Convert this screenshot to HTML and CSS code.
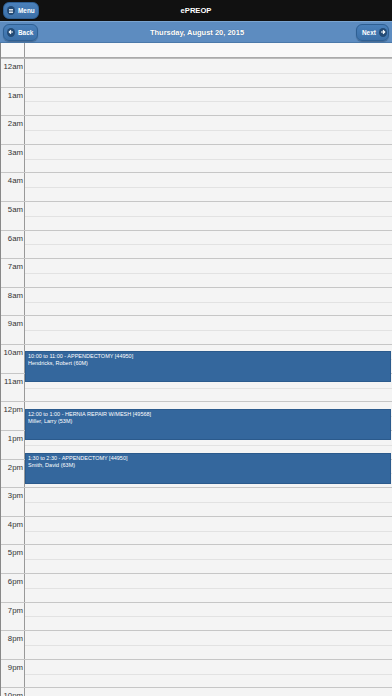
FILE: index.html
```html
<!DOCTYPE html>
<html>
<head>
<meta charset="utf-8">
<link rel="stylesheet" href="styles.css">
</head>
<body>
<div class="header">
  <button class="btn btn-menu"><span class="ico"><svg viewBox="0 0 10 10" width="8" height="8"><path d="M2.5 3.2h5M2.5 5h5M2.5 6.8h5" stroke="#fff" stroke-width="1.1"/></svg></span>Menu</button>
  <div class="app-title">ePREOP</div>
</div>
<div class="toolbar">
  <button class="btn btn-back"><span class="ico"><svg viewBox="0 0 10 10" width="8" height="8"><path d="M7.5 5H3M5 2.8L2.8 5 5 7.2" stroke="#fff" stroke-width="1.4" fill="none"/></svg></span>Back</button>
  <div class="date-title">Thursday, August 20, 2015</div>
  <button class="btn btn-next">Next<span class="ico"><svg viewBox="0 0 10 10" width="8" height="8"><path d="M2.5 5H7M5 2.8L7.2 5 5 7.2" stroke="#fff" stroke-width="1.4" fill="none"/></svg></span></button>
</div>
<div class="cal">
  <div class="allday"><div class="tcol"></div><div class="slot"></div></div>
  <div class="hours">
    <div class="hour"><div class="tcol">12am</div><div class="slot"><div class="half"></div></div></div>
    <div class="hour"><div class="tcol">1am</div><div class="slot"><div class="half"></div></div></div>
    <div class="hour"><div class="tcol">2am</div><div class="slot"><div class="half"></div></div></div>
    <div class="hour"><div class="tcol">3am</div><div class="slot"><div class="half"></div></div></div>
    <div class="hour"><div class="tcol">4am</div><div class="slot"><div class="half"></div></div></div>
    <div class="hour"><div class="tcol">5am</div><div class="slot"><div class="half"></div></div></div>
    <div class="hour"><div class="tcol">6am</div><div class="slot"><div class="half"></div></div></div>
    <div class="hour"><div class="tcol">7am</div><div class="slot"><div class="half"></div></div></div>
    <div class="hour"><div class="tcol">8am</div><div class="slot"><div class="half"></div></div></div>
    <div class="hour"><div class="tcol">9am</div><div class="slot"><div class="half"></div></div></div>
    <div class="hour"><div class="tcol">10am</div><div class="slot"><div class="half"></div></div></div>
    <div class="hour"><div class="tcol">11am</div><div class="slot"><div class="half"></div></div></div>
    <div class="hour"><div class="tcol">12pm</div><div class="slot"><div class="half"></div></div></div>
    <div class="hour"><div class="tcol">1pm</div><div class="slot"><div class="half"></div></div></div>
    <div class="hour"><div class="tcol">2pm</div><div class="slot"><div class="half"></div></div></div>
    <div class="hour"><div class="tcol">3pm</div><div class="slot"><div class="half"></div></div></div>
    <div class="hour"><div class="tcol">4pm</div><div class="slot"><div class="half"></div></div></div>
    <div class="hour"><div class="tcol">5pm</div><div class="slot"><div class="half"></div></div></div>
    <div class="hour"><div class="tcol">6pm</div><div class="slot"><div class="half"></div></div></div>
    <div class="hour"><div class="tcol">7pm</div><div class="slot"><div class="half"></div></div></div>
    <div class="hour"><div class="tcol">8pm</div><div class="slot"><div class="half"></div></div></div>
    <div class="hour"><div class="tcol">9pm</div><div class="slot"><div class="half"></div></div></div>
    <div class="hour"><div class="tcol">10pm</div><div class="slot"><div class="half"></div></div></div>
    <div class="hour"><div class="tcol">11pm</div><div class="slot"><div class="half"></div></div></div>
  </div>
  <div class="event ev1"><div>10:00 to 11:00 - APPENDECTOMY [44950]</div><div>Hendricks, Robert (60M)</div></div>
  <div class="event ev2"><div>12:00 to 1:00 - HERNIA REPAIR W/MESH [49568]</div><div>Miller, Larry (53M)</div></div>
  <div class="event ev3"><div>1:30 to 2:30 - APPENDECTOMY [44950]</div><div>Smith, David (63M)</div></div>
</div>
</body>
</html>
```
FILE: styles.css
```css
* { box-sizing: border-box; }
html, body { margin: 0; padding: 0; }
body {
  width: 392px;
  height: 696px;
  overflow: hidden;
  font-family: "Liberation Sans", Arial, sans-serif;
  background: #f4f4f4;
}
.header {
  height: 21px;
  background: #111;
  display: flex;
  align-items: center;
  position: relative;
  padding: 0 3px;
}
.app-title {
  position: absolute;
  left: 0; right: 0;
  text-align: center;
  color: #fff;
  font-weight: bold;
  font-size: 7.6px;
  line-height: 21px;
  pointer-events: none;
}
.toolbar {
  height: 22px;
  background: #5d8cc0;
  border-top: 1px solid #7aa4d0;
  border-bottom: 1px solid #4b79aa;
  display: flex;
  align-items: center;
  justify-content: space-between;
  padding: 0 3px;
}
.date-title {
  color: #fff;
  font-weight: bold;
  font-size: 7.5px;
  text-shadow: 0 0 1px rgba(0,0,0,.3);
}
.btn {
  display: flex;
  align-items: center;
  gap: 3px;
  height: 17px;
  border-radius: 6px;
  border: 1px solid #2e5f93;
  background: linear-gradient(#4a80ba, #3c70a8);
  color: #fff;
  font-family: "Liberation Sans", Arial, sans-serif;
  font-weight: bold;
  font-size: 6.4px;
  padding: 0 5px 0 3px;
  box-shadow: 0 1px 1px rgba(0,0,0,.25);
}
.btn-menu { width: 36px; }
.btn-back { width: 35px; }
.btn-next { width: 33px; padding: 0 3px 0 5px; margin-right: 0; }
.ico {
  width: 9px; height: 9px;
  border-radius: 50%;
  background: #234a75;
  display: flex;
  align-items: center;
  justify-content: center;
}
.ico svg { display: block; }
.cal {
  position: relative;
  border-left: 1px solid #888;
}
.allday {
  display: flex;
  height: 15px;
  background: #f8f8f8;
  border-bottom: 1px solid #aaa;
}
.tcol {
  width: 24px;
  flex: none;
  border-right: 1px solid #999;
  text-align: right;
  font-size: 7.8px;
  color: #333;
  padding: 3px 1px 0 0;
  line-height: 10px;
}
.slot { flex: 1; position: relative; }
.hours { border-top: 1px solid #bbb; }
.hour {
  display: flex;
  height: 28.62px;
  border-bottom: 1px solid #c6c6c6;
}
.half {
  position: absolute;
  left: 0; right: 0;
  top: 13.8px;
  border-top: 1px solid #e2e2e2;
}
.event {
  position: absolute;
  left: 24px;
  right: 1px;
  background: #34679d;
  border: 1px solid #2b5a8c;
  color: #fff;
  font-size: 5.5px;
  line-height: 6.6px;
  padding: 1px 2px;
}
.ev1 { top: 308px; height: 31px; }
.ev2 { top: 366px; height: 31px; }
.ev3 { top: 410px; height: 31px; }
```
